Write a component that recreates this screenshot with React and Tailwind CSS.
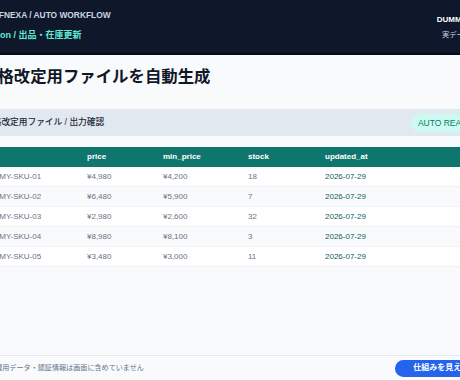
import React from 'react';

const rows = [
  { sku: 'DUMMY-SKU-01', price: '¥4,980', min: '¥4,200', stock: '18', updated: '2026-07-29' },
  { sku: 'DUMMY-SKU-02', price: '¥6,480', min: '¥5,900', stock: '7', updated: '2026-07-29' },
  { sku: 'DUMMY-SKU-03', price: '¥2,980', min: '¥2,600', stock: '32', updated: '2026-07-29' },
  { sku: 'DUMMY-SKU-04', price: '¥8,980', min: '¥8,100', stock: '3', updated: '2026-07-29' },
  { sku: 'DUMMY-SKU-05', price: '¥3,480', min: '¥3,000', stock: '11', updated: '2026-07-29' },
];

const cols = 'grid grid-cols-[106px_76px_85px_77px_1fr] items-center';

export default function App() {
  return (
    <div
      className="w-[460px] h-[380px] overflow-hidden bg-[#f8fafc]"
      style={{ fontFamily: '"Liberation Sans", "Noto Sans CJK JP", sans-serif' }}
    >
      <div className="flex flex-col h-full w-[560px] -ml-[43px]">
        {/* header */}
        <header className="h-[55px] shrink-0 bg-[#0f172a] border-b-2 border-[#060a14] pl-[19px] pr-6 flex items-start justify-between">
          <div className="flex flex-col pt-[10px] gap-[10px]">
            <div className="text-[8.4px] leading-[10px] font-bold text-[#cbd5e1]">EASYFNEXA / AUTO WORKFLOW</div>
            <div className="text-[9px] leading-[10px] font-bold text-[#5eead4]">Amazon / 出品・在庫更新</div>
          </div>
          <div className="flex flex-col items-end pt-[15px] gap-[5px]">
            <div className="text-[8px] leading-[10px] font-bold text-white">DUMMY MODE</div>
            <div className="text-[7.3px] leading-[9px] text-[#cbd5e1]">実データ未使用</div>
          </div>
        </header>

        {/* body */}
        <main className="flex-1 flex flex-col">
          <h1 className="px-6 pt-[11px] h-[54px] text-[16.4px] leading-[20px] font-bold text-[#111827]">
            価格改定用ファイルを自動生成
          </h1>

          <div className="h-[27px] bg-[#e2e8f0] flex items-center justify-between pl-[27px] pr-[38px]">
            <span className="text-[8.7px] font-medium text-[#1f2937]">価格改定用ファイル / 出力確認</span>
            <span className="h-[16px] px-[6px] rounded-full bg-[#ccfbf1] shadow-[0_0_6px_#ccfbf1] text-[8.5px] leading-[16px] text-[#0f766e]">
              AUTO READY
            </span>
          </div>

          <div className="mt-[11px] px-6">
            <div className="-mr-6">
              <div className={`${cols} h-[20px] bg-[#0f766e] text-[8px] font-bold text-white`}>
                <div>sku</div>
                <div>price</div>
                <div>min_price</div>
                <div>stock</div>
                <div>updated_at</div>
              </div>
              {rows.map((r, i) => (
                <div
                  key={r.sku}
                  className={`${cols} h-[20px] text-[8px] text-[#6b7280] border-b border-[#eef2f6] ${i % 2 === 1 ? 'bg-[#f8fafc]' : 'bg-white'}`}
                >
                  <div>{r.sku}</div>
                  <div>{r.price}</div>
                  <div>{r.min}</div>
                  <div>{r.stock}</div>
                  <div className="font-medium text-[#115e59]">{r.updated}</div>
                </div>
              ))}
            </div>
          </div>
        </main>

        {/* footer */}
        <footer className="h-[25px] shrink-0 border-t border-[#e2e8f0] bg-[#f8fafc] flex items-center justify-between pl-6 pr-[22px]">
          <span className="text-[7.1px] text-[#64748b]">※実運用データ・認証情報は画面に含めていません</span>
          <button className="h-[17px] px-[18px] rounded-full bg-[#2563eb] text-[8px] font-bold text-white">
            仕組みを見える化
          </button>
        </footer>
      </div>
    </div>
  );
}
